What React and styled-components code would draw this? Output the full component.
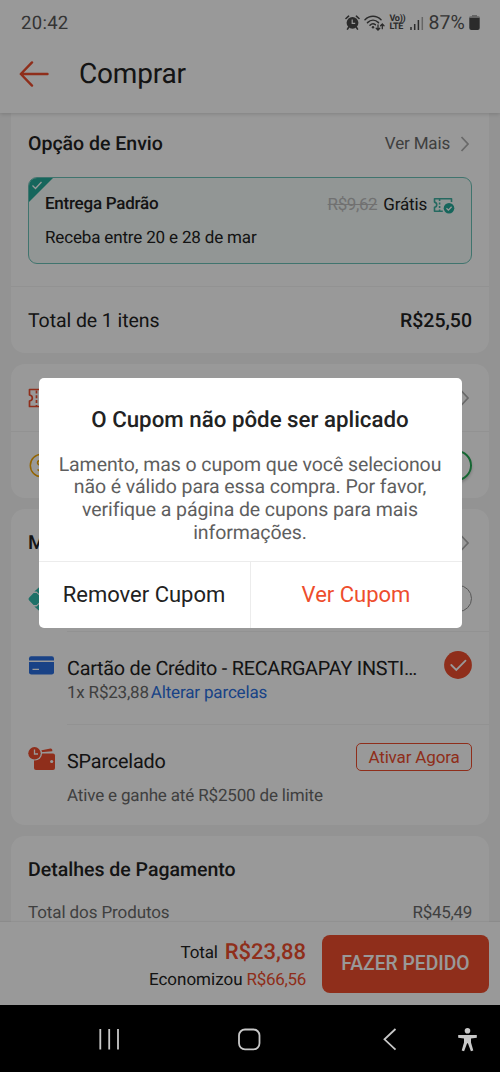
import React from 'react';
import styled, { createGlobalStyle } from 'styled-components';

const GlobalStyle = createGlobalStyle`
    * {
        box-sizing: border-box;
    }

    body {
        margin: 0;
        background: #000000;
        font-family: Roboto, 'Noto Sans', sans-serif;
        text-rendering: geometricPrecision;
    }
`;

const Phone = styled.div`
    position: relative;
    display: flex;
    flex-direction: column;
    width: 500px;
    height: 1072px;
    overflow: hidden;
    background-color: #f5f5f5;
`;

const Label = styled.span`
    font-size: ${({ $size }) => $size || 17}px;
    font-weight: ${({ $weight }) => $weight || 400};
    color: ${({ $color }) => $color || '#222222'};
    letter-spacing: ${({ $spacing }) => $spacing ?? -0.16}px;
    line-height: 24px;
    white-space: nowrap;
`;

const Heading = styled(Label)`
    font-size: 19.5px;
    font-weight: 500;
    letter-spacing: 0;
`;

const Top = styled.header`
    flex: none;
    height: 113px;
    background-color: #ffffff;
    box-shadow: 0 1px 4px rgba(0, 0, 0, 0.16);
    z-index: 1;
`;

const StatusBar = styled.div`
    display: flex;
    align-items: center;
    justify-content: space-between;
    height: 45px;
    padding: 0 20px 0 21px;
`;

const StatusIcons = styled.div`
    display: flex;
    align-items: center;
    gap: 4px;
`;

const TitleBar = styled.div`
    display: flex;
    align-items: center;
    height: 57px;
    padding-left: 19px;
    gap: 30px;
`;

const Content = styled.main`
    flex: 1;
    min-height: 0;
    display: flex;
    flex-direction: column;
    gap: 11px;
    padding: 0 11px;
    overflow: hidden;
`;

const Card = styled.section`
    flex: none;
    height: ${({ $height }) => $height}px;
    background-color: #ffffff;
    border-radius: ${({ $first }) => ($first ? '0 0 14px 14px' : '14px')};
    overflow: hidden;
`;

const Row = styled.div`
    display: flex;
    align-items: center;
    justify-content: space-between;
    height: ${({ $height }) => $height}px;
    padding: 0 17px;
`;

const PixRow = styled(Row)`
    padding-bottom: 10px;
`;

const Inline = styled.div`
    display: flex;
    align-items: center;
    gap: ${({ $gap }) => $gap || 0}px;
`;

const Divider = styled.div`
    height: 1px;
    margin-left: ${({ $inset }) => $inset || 0}px;
    background-color: #f3f3f3;
`;

const ShippingOption = styled.div`
    position: relative;
    height: 87px;
    margin: 3px 17px 22px;
    padding: 14px 16px 0 16px;
    border: 1px solid #6cc1b7;
    border-radius: 9px;
    background-color: #f3faf8;
    overflow: hidden;
`;

const SelectedCorner = styled.svg`
    position: absolute;
    top: 0;
    left: 0;
`;

const OptionLine = styled.div`
    display: flex;
    align-items: center;
    justify-content: space-between;
    height: 24px;
    margin-bottom: 10px;
`;

const OptionPrice = styled(Inline)`
    padding-top: 2px;
`;

const OldPrice = styled(Label)`
    text-decoration: line-through;
`;

const Knob = styled.div`
    width: 31px;
    height: 31px;
    border: 2px solid #26aa55;
    border-radius: 50%;
    box-shadow: 0 2px 3px rgba(0, 0, 0, 0.2);
`;

const RadioCircle = styled.div`
    width: 27px;
    height: 27px;
    border: 1px solid #929292;
    border-radius: 50%;
`;

const PaymentRow = styled.div`
    display: flex;
    align-items: flex-start;
    height: ${({ $height }) => $height}px;
    padding: ${({ $top }) => $top}px 17px 0 17px;
`;

const PaymentIcon = styled.div`
    flex: none;
    width: 39px;
    height: 30px;
`;

const PaymentText = styled.div`
    flex: 1;
    display: flex;
    flex-direction: column;
    gap: ${({ $gap }) => $gap || 0}px;
    padding-top: ${({ $top }) => $top || 0}px;
`;

const SelectedMark = styled.svg`
    flex: none;
    margin-top: -5px;
`;

const ActivateButton = styled.button`
    width: 116px;
    height: 28px;
    padding: 0;
    margin-top: -4px;
    border: 1.5px solid #ee4d2d;
    border-radius: 5px;
    background: none;
    color: #ee4d2d;
    font-family: inherit;
    font-size: 17px;
    line-height: 24px;
    letter-spacing: -0.16px;
`;

const CheckoutBar = styled.footer`
    flex: none;
    display: flex;
    align-items: center;
    justify-content: flex-end;
    gap: 16px;
    height: 83px;
    padding-right: 11px;
    background-color: #ffffff;
    box-shadow: 0 -1px 1px rgba(0, 0, 0, 0.05);
    z-index: 1;
`;

const Totals = styled.div`
    display: flex;
    flex-direction: column;
    align-items: flex-end;
    gap: 3px;
    padding-top: 5px;
`;

const OrderButton = styled.button`
    width: 167px;
    height: 58px;
    padding: 0;
    border: 0;
    border-radius: 8px;
    background-color: #ee4d2d;
    color: #ffffff;
    font-family: inherit;
    font-size: 19.3px;
    font-weight: 500;
`;

const SystemNav = styled.nav`
    flex: none;
    height: 67px;
    background-color: #000000;
`;

const Overlay = styled.div`
    position: absolute;
    top: 0;
    left: 0;
    z-index: 2;
    display: flex;
    align-items: center;
    justify-content: center;
    width: 500px;
    height: 1005px;
    background-color: rgba(0, 0, 0, 0.4);
`;

const Dialog = styled.div`
    display: flex;
    flex-direction: column;
    width: 423px;
    height: 250px;
    border-radius: 5px;
    background-color: #ffffff;
    overflow: hidden;
`;

const DialogTitle = styled.h2`
    margin: 27px 0 0;
    font-size: 22.3px;
    font-weight: 500;
    line-height: 30px;
    text-align: center;
    color: #222222;
`;

const DialogText = styled.p`
    flex: 1;
    margin: 19px 0 0;
    font-size: 19.5px;
    line-height: 22.7px;
    letter-spacing: -0.08px;
    text-align: center;
    color: #5e5e5e;
`;

const DialogActions = styled.div`
    display: flex;
    height: 67px;
    border-top: 1px solid #ececec;
`;

const DialogButton = styled.button`
    flex: 1;
    padding: 0;
    border: 0;
    border-left: ${({ $primary }) => ($primary ? '1px solid #ececec' : '0')};
    background: none;
    color: ${({ $primary }) => ($primary ? '#ee4d2d' : '#222222')};
    font-family: inherit;
    font-size: 22px;
`;

const ChevronSvg = styled.svg`
    flex: none;
    margin-right: 2px;
`;

function Chevron() {
    return (
        <ChevronSvg width="10" height="16" viewBox="0 0 10 16" fill="none" stroke="#b0b0b0" strokeWidth="1.8">
            <path d="M1.5 1l6.5 7-6.5 7" />
        </ChevronSvg>
    );
}

function AlarmIcon() {
    return (
        <svg width="15" height="15" viewBox="0 0 15 15">
            <circle cx="7.5" cy="7.8" r="5.9" fill="#484848" />
            <path d="M1 3.5L3.6 1.2M14 3.5l-2.6-2.3M3.5 12.5l-1 1.6M11.5 12.5l1 1.6" stroke="#484848" strokeWidth="1.6" strokeLinecap="round" />
            <path d="M7.2 4.5v3.8h3" fill="none" stroke="#ffffff" strokeWidth="1.2" />
        </svg>
    );
}

function WifiIcon() {
    return (
        <svg width="21" height="16" viewBox="0 0 21 16" fill="none" stroke="#484848" strokeWidth="1.5" strokeLinecap="round">
            <path d="M1 4.7c4.6-4.7 11.4-4.7 16 0M3.5 7.6c3.3-3.3 7.7-3.3 11 0M6 10.3c1.8-1.8 3.7-1.8 5.3-.6" />
            <circle cx="9" cy="12.3" r="1.2" fill="#484848" stroke="none" />
            <path d="M14 10v5M12.2 13.3L14 15l1.8-1.7M18.3 13.7V9M16.6 10.7L18.3 9l1.7 1.7" strokeWidth="1.3" />
        </svg>
    );
}

const Volte = styled.div`
    width: 17px;
    font-size: 9px;
    font-weight: 700;
    line-height: 8px;
    letter-spacing: -0.3px;
    color: #484848;
    white-space: nowrap;
`;

function SignalIcon() {
    return (
        <svg width="14" height="14" viewBox="0 0 14 14">
            <path d="M1 11v3M4.7 8v6M8.4 4v10" stroke="#484848" strokeWidth="1.5" />
            <path d="M12.3 1v13" stroke="#aaaaaa" strokeWidth="1.5" />
        </svg>
    );
}

function BatteryIcon() {
    return (
        <svg width="11" height="15" viewBox="0 0 11 15">
            <path d="M3 0h5v1.2h1.5Q11 1.2 11 3H0q0-1.8 1.5-1.8H3z" fill="#aaaaaa" />
            <path d="M.3 3h10.4v10q0 2-2 2H2.3q-2 0-2-2z" fill="#484848" />
        </svg>
    );
}

function BackArrow() {
    return (
        <svg width="30" height="26" viewBox="0 0 30 26" fill="none" stroke="#ee4d2d" strokeWidth="2.4" strokeLinecap="round" strokeLinejoin="round">
            <path d="M13 1.4L1.8 13 13 24.6M2 13h26.5" />
        </svg>
    );
}

function FreeShippingIcon() {
    return (
        <svg width="22" height="17" viewBox="0 0 22 17" fill="none">
            <path d="M18.5 5V1.8H1.5v3.3c3 .7 3 4.5 0 5.2v4h8.3" stroke="#3fb0a1" strokeWidth="1.6" strokeLinejoin="round" />
            <path d="M6.6 2v12" stroke="#3fb0a1" strokeWidth="1.6" strokeDasharray="2 1.5" />
            <circle cx="16" cy="11.2" r="5.3" fill="#26aa99" />
            <path d="M13.5 11.2l1.9 1.9 3.2-3.4" stroke="#ffffff" strokeWidth="1.3" />
        </svg>
    );
}

function VoucherIcon() {
    return (
        <svg width="25" height="20" viewBox="0 0 25 20" fill="none" stroke="#ee4d2d" strokeWidth="1.7">
            <path d="M1.5 1.5h22v5c-3 .8-3 6.2 0 7v5h-22V13c3.800-.8 3.800-5.200 0-6z" strokeLinejoin="round" />
            <path d="M8.5 2.5V18" strokeDasharray="3 1.8" />
        </svg>
    );
}

function CoinIcon() {
    return (
        <svg width="25" height="25" viewBox="0 0 25 25" fill="none" stroke="#f6a700" strokeWidth="1.5">
            <circle cx="13.500" cy="12.500" r="11.200" />
            <path d="M17.500 8.500c-2.500-2-8-1.700-8 1.500 0 3.500 8 2 8 5.500 0 3.200-5.500 3.500-8 1" />
        </svg>
    );
}

function PixIcon() {
    return (
        <svg width="28" height="28" viewBox="0 0 28 28" fill="#32bcad">
            <path d="M6.300 6.400L12.500 1q1.500-1.200 3 0l6.200 5.400h-2.200L14 11.500 8.500 6.400z" />
            <path d="M6.300 21.600l6.200 5.400q1.500 1.200 3 0l6.200-5.400h-2.200L14 16.500l-5.500 5.100z" />
            <path d="M1.200 12.500l4.400-4.400h3l5 4.700v2.400l-5 4.700h-3l-4.400-4.400q-1.300-1.500 0-3z" />
            <path d="M26.800 12.500l-4.400-4.400h-3l-5 4.700v2.400l5 4.700h3l4.400-4.400q1.300-1.500 0-3z" />
        </svg>
    );
}

function CreditCardIcon() {
    return (
        <svg width="27" height="19" viewBox="0 0 27 19">
            <path d="M1 4.500V2.600Q1 .3 3.200.3h20.600Q26 .3 26 2.600v1.900z" fill="#2b6fdf" />
            <path d="M1 6h25v10.200q0 2.400-2.300 2.400H3.300Q1 18.600 1 16.200z" fill="#2b6fdf" />
            <path d="M4.500 13.300H11" stroke="#ffffff" strokeWidth="1.300" />
        </svg>
    );
}

function WalletIcon() {
    return (
        <svg width="28" height="24" viewBox="0 0 28 24">
            <path d="M12.500 3.500l10-2q1.500-.2 1.800 1.500v1.300l-11.800.9z" fill="#ee4d2d" />
            <path d="M6 6.500h19q2 0 2 2V21q0 2-2 2H8q-2 0-2-2z" fill="#ee4d2d" />
            <circle cx="23.700" cy="14.500" r="1.600" fill="#ffffff" />
            <circle cx="6.800" cy="6.300" r="7.300" fill="#ffffff" />
            <circle cx="6.500" cy="6.300" r="6.200" fill="#ee4d2d" />
            <path d="M6.500 2.500V7H10" fill="none" stroke="#ffffff" strokeWidth="1.300" />
        </svg>
    );
}

function SelectedIcon() {
    return (
        <SelectedMark width="28" height="28" viewBox="0 0 28 28">
            <circle cx="14" cy="14" r="13.900" fill="#ee4d2d" />
            <path d="M7.300 14l5 5 9.200-9.300" fill="none" stroke="#ffffff" strokeWidth="1.800" strokeLinecap="round" />
        </SelectedMark>
    );
}

function NavIcons() {
    return (
        <svg width="500" height="67" viewBox="0 0 500 67" fill="none" stroke="#c8c8c8" strokeWidth="1.800">
            <path d="M100.300 24v20.500M109.200 24v20.500M118 24v20.500" />
            <rect x="239" y="24.500" width="20.500" height="19.800" rx="6" />
            <path d="M395.500 24l-11 10.300 11 10.300" />
            <circle cx="467.500" cy="25.800" r="2.800" fill="#c8c8c8" stroke="none" />
            <path d="M458.200 30h18.600v2.700l-5.800.8v4l2.300 8-2.400.7-3-8h-.8l-3 8-2.400-.7 2.300-8v-4l-5.800-.8z" fill="#c8c8c8" stroke="none" />
        </svg>
    );
}

function App() {
    return (
        <Phone>
            <GlobalStyle />

            <Top>
                <StatusBar>
                    <Label $size={18.5} $color="#585858" $spacing={0.3}>20:42</Label>
                    <StatusIcons>
                        <AlarmIcon />
                        <WifiIcon />
                        <Volte>
                            <div>Vo))</div>
                            <div>LTE</div>
                        </Volte>
                        <SignalIcon />
                        <Label $size={19.5} $color="#585858" $spacing={0.1}>87%</Label>
                        <BatteryIcon />
                    </StatusIcons>
                </StatusBar>
                <TitleBar>
                    <BackArrow />
                    <Label $size={28} $spacing={-0.2}>Comprar</Label>
                </TitleBar>
            </Top>

            <Content>
                <Card $height={240} $first>
                    <Row $height={61}>
                        <Heading>Opção de Envio</Heading>
                        <Inline $gap={10}>
                            <Label $color="#6a6a6a">Ver Mais</Label>
                            <Chevron />
                        </Inline>
                    </Row>
                    <ShippingOption>
                        <SelectedCorner width="24" height="24" viewBox="0 0 24 24">
                            <path d="M0 0h24L0 24z" fill="#26aa99" />
                            <path d="M3.500 7.500l3 3 6-6.500" fill="none" stroke="#ffffff" strokeWidth="1.300" />
                        </SelectedCorner>
                        <OptionLine>
                            <Label $weight={500} $spacing={-0.24}>Entrega Padrão</Label>
                            <OptionPrice $gap={6}>
                                <OldPrice $color="#bdbdbd" $spacing={-0.4}>R$9,62</OldPrice>
                                <Label>Grátis</Label>
                                <FreeShippingIcon />
                            </OptionPrice>
                        </OptionLine>
                        <Label>Receba entre 20 e 28 de mar</Label>
                    </ShippingOption>
                    <Divider />
                    <Row $height={67}>
                        <Label $size={19.5} $spacing={-0.08}>Total de 1 itens</Label>
                        <Heading>R$25,50</Heading>
                    </Row>
                </Card>

                <Card $height={134}>
                    <Row $height={67}>
                        <VoucherIcon />
                        <Chevron />
                    </Row>
                    <Divider />
                    <Row $height={67}>
                        <CoinIcon />
                        <Knob />
                    </Row>
                </Card>

                <Card $height={316}>
                    <Row $height={67}>
                        <Heading>M</Heading>
                        <Chevron />
                    </Row>
                    <PixRow $height={55}>
                        <PixIcon />
                        <RadioCircle />
                    </PixRow>
                    <Divider $inset={56} />
                    <PaymentRow $height={92} $top={24}>
                        <PaymentIcon>
                            <CreditCardIcon />
                        </PaymentIcon>
                        <PaymentText $top={1}>
                            <Label $size={19.8} $spacing={-0.24}>Cartão de Crédito - RECARGAPAY INSTI…</Label>
                            <Inline $gap={2}>
                                <Label $color="#6a6a6a" $spacing={-0.2}>1x R$23,88</Label>
                                <Label $color="#2b6fdf">Alterar parcelas</Label>
                            </Inline>
                        </PaymentText>
                        <SelectedIcon />
                    </PaymentRow>
                    <Divider $inset={56} />
                    <PaymentRow $height={100} $top={22}>
                        <PaymentIcon>
                            <WalletIcon />
                        </PaymentIcon>
                        <PaymentText $gap={10} $top={3}>
                            <Label $size={19.8}>SParcelado</Label>
                            <Label $color="#6a6a6a">Ative e ganhe até R$2500 de limite</Label>
                        </PaymentText>
                        <ActivateButton>Ativar Agora</ActivateButton>
                    </PaymentRow>
                </Card>

                <Card $height={150}>
                    <Row $height={67}>
                        <Heading>Detalhes de Pagamento</Heading>
                    </Row>
                    <Row $height={20}>
                        <Label $color="#6a6a6a" $spacing={-0.1}>Total dos Produtos</Label>
                        <Label $color="#6a6a6a" $spacing={-0.3}>R$45,49</Label>
                    </Row>
                </Card>
            </Content>

            <CheckoutBar>
                <Totals>
                    <Inline $gap={7}>
                        <Label>Total</Label>
                        <Label $size={22} $weight={500} $color="#ee4d2d" $spacing={0}>R$23,88</Label>
                    </Inline>
                    <Inline $gap={4}>
                        <Label $spacing={0}>Economizou</Label>
                        <Label $color="#ee4d2d" $spacing={-0.3}>R$66,56</Label>
                    </Inline>
                </Totals>
                <OrderButton>FAZER PEDIDO</OrderButton>
            </CheckoutBar>

            <SystemNav>
                <NavIcons />
            </SystemNav>

            <Overlay>
                <Dialog>
                    <DialogTitle>O Cupom não pôde ser aplicado</DialogTitle>
                    <DialogText>
                        Lamento, mas o cupom que você selecionou
                        <br />
                        não é válido para essa compra. Por favor,
                        <br />
                        verifique a página de cupons para mais
                        <br />
                        informações.
                    </DialogText>
                    <DialogActions>
                        <DialogButton>Remover Cupom</DialogButton>
                        <DialogButton $primary>Ver Cupom</DialogButton>
                    </DialogActions>
                </Dialog>
            </Overlay>
        </Phone>
    );
}

export default App;
